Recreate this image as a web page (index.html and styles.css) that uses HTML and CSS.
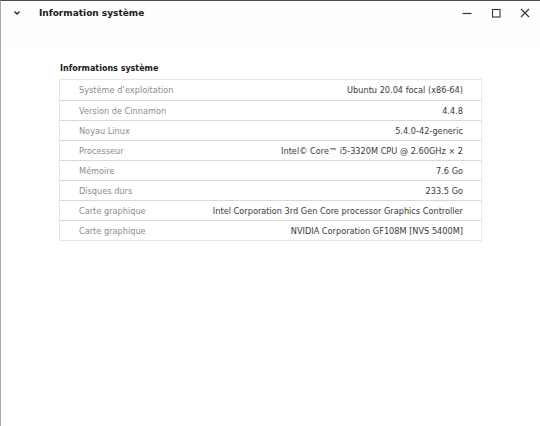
FILE: index.html
```html
<!DOCTYPE html>
<html lang="fr">
<head>
<meta charset="utf-8">
<title>Information système</title>
<link rel="stylesheet" href="styles.css">
</head>
<body>
<div class="window">
  <header class="titlebar">
    <div class="bar">
      <svg class="chevron" width="8" height="6" viewBox="0 0 8 6"><polyline points="1.5,1.5 4,4 6.5,1.5" fill="none" stroke="#222" stroke-width="1.3"/></svg>
      <span class="title">Information système</span>
      <span class="spacer"></span>
      <div class="controls">
        <button class="ctl"><svg width="12" height="12" viewBox="0 0 12 12"><line x1="1.5" y1="6.5" x2="10.5" y2="6.5" stroke="#333" stroke-width="1.2"/></svg></button>
        <button class="ctl"><svg width="12" height="12" viewBox="0 0 12 12"><rect x="2.5" y="2.5" width="7.5" height="7.5" fill="none" stroke="#333" stroke-width="1.1"/></svg></button>
        <button class="ctl"><svg width="12" height="12" viewBox="0 0 12 12"><path d="M2 2 L10 10 M10 2 L2 10" stroke="#333" stroke-width="1.1"/></svg></button>
      </div>
    </div>
  </header>
  <main class="content">
    <h2 class="heading">Informations système</h2>
    <div class="table">
      <div class="row"><span class="label">Système d’exploitation</span><span class="value">Ubuntu 20.04 focal (x86-64)</span></div>
      <div class="row"><span class="label">Version de Cinnamon</span><span class="value">4.4.8</span></div>
      <div class="row"><span class="label">Noyau Linux</span><span class="value">5.4.0-42-generic</span></div>
      <div class="row"><span class="label">Processeur</span><span class="value">Intel© Core™ i5-3320M CPU @ 2.60GHz × 2</span></div>
      <div class="row"><span class="label">Mémoire</span><span class="value">7.6 Go</span></div>
      <div class="row"><span class="label">Disques durs</span><span class="value">233.5 Go</span></div>
      <div class="row"><span class="label">Carte graphique</span><span class="value">Intel Corporation 3rd Gen Core processor Graphics Controller</span></div>
      <div class="row"><span class="label">Carte graphique</span><span class="value">NVIDIA Corporation GF108M [NVS 5400M]</span></div>
    </div>
  </main>
</div>
</body>
</html>
```
FILE: styles.css
```css
* { box-sizing: border-box; }
html, body { margin: 0; padding: 0; background: #ffffff; }
body {
  font-family: "DejaVu Sans", "Liberation Sans", sans-serif;
  width: 540px;
  height: 426px;
  overflow: hidden;
}
.window {
  width: 540px;
  height: 426px;
  border-top: 1px solid #4a4a4a;
  border-left: 1px solid #b0a8a8;
  background: #ffffff;
  display: flex;
  flex-direction: column;
}
.titlebar {
  height: 43px;
  background: #fefefe;
  border-bottom: 1px solid #f9f9f9;
}
.bar {
  height: 23px;
  display: flex;
  align-items: center;
  padding-left: 12px;
  padding-right: 9px;
}
.chevron { display: block; }
.title {
  margin-left: 18px;
  font-size: 9px;
  font-weight: bold;
  color: #1a1a1a;
}
.spacer { flex: 1; }
.controls { display: flex; gap: 17px; }
.ctl {
  border: 0;
  background: none;
  padding: 0;
  width: 12px;
  height: 12px;
  display: flex;
}
.content {
  padding: 20px 58px 0 58px;
}
.heading {
  margin: 0 0 5px 1px;
  font-size: 8px;
  line-height: 10px;
  font-weight: bold;
  color: #1a1a1a;
}
.table {
  border: 1px solid #e6e6e6;
  border-right-color: #ececec;
}
.row {
  height: 20px;
  display: flex;
  align-items: center;
  justify-content: space-between;
  padding: 0 18px 0 19px;
  border-top: 1px solid #d9d9d9;
  font-size: 8.2px;
}
.row:first-child { border-top: 0; }
.label { color: #8c8c8c; }
.value { color: #3a3a3a; }
```
